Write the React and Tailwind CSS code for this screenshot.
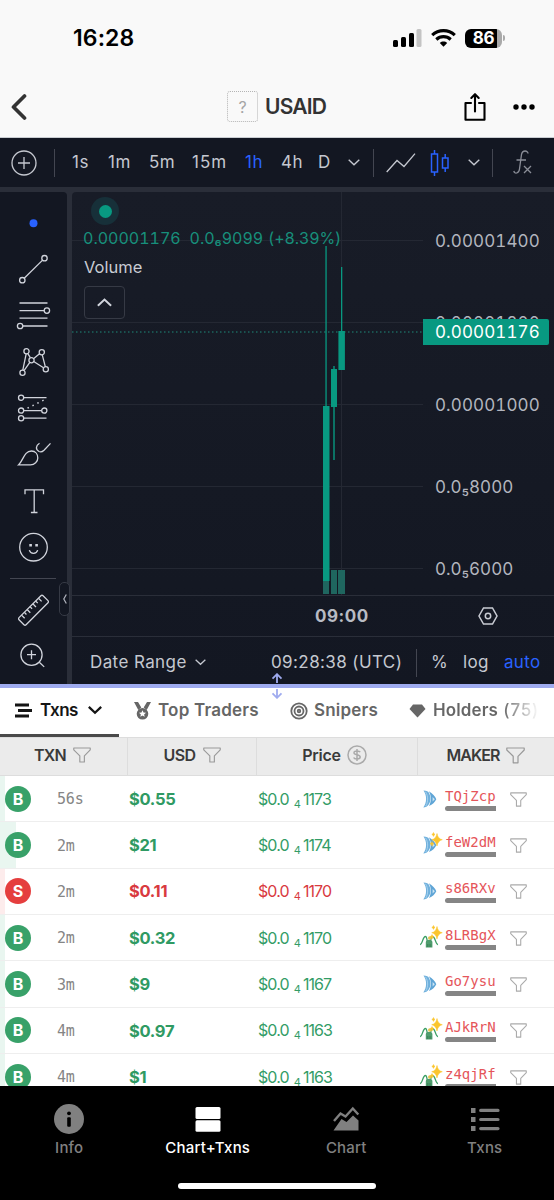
import React from "react";

const trades = [
  { side: "B", age: "56s", usd: "$0.55", price: "1173", maker: "TQjZcp", fish: true, isNew: false },
  { side: "B", age: "2m", usd: "$21", price: "1174", maker: "feW2dM", fish: true, isNew: true, big: true },
  { side: "S", age: "2m", usd: "$0.11", price: "1170", maker: "s86RXv", fish: true, isNew: false },
  { side: "B", age: "2m", usd: "$0.32", price: "1170", maker: "8LRBgX", fish: false, isNew: true },
  { side: "B", age: "3m", usd: "$9", price: "1167", maker: "Go7ysu", fish: true, isNew: false },
  { side: "B", age: "4m", usd: "$0.97", price: "1163", maker: "AJkRrN", fish: false, isNew: true },
  { side: "B", age: "4m", usd: "$1", price: "1163", maker: "z4qjRf", fish: false, isNew: true },
];

const Chevron = ({ className = "w-[12px]", width = 1.4 }) => (
  <svg viewBox="0 0 12 7" className={`${className} shrink-0`} fill="none" stroke="currentColor" strokeWidth={width}>
    <path d="M.7 .8 6 5.8 11.3 .8" />
  </svg>
);

const Funnel = ({ className }) => (
  <svg viewBox="0 0 19 17" className={`${className} shrink-0`} fill="none" stroke="currentColor" strokeWidth="1.2" strokeLinejoin="round">
    <path d="M.8 1H18.2V3L12 9.3V15.8H7.2V9.3L.8 3Z" />
  </svg>
);

const Tool = ({ children }) => (
  <svg
    viewBox="-23.5 -23.2 47 46.4"
    className="h-[46.4px] w-[47px] shrink-0"
    fill="none"
    stroke="#d1d4dc"
    strokeWidth="1.3"
  >
    {children}
  </svg>
);

const StatusBar = () => (
  <div className="flex h-[76px] items-center pl-[73px] text-black">
    <span className="w-[320px] text-[23px] font-semibold leading-none tracking-[0.1px]">16:28</span>
    <svg viewBox="0 0 29 18" className="h-[18px] w-[29px]">
      <rect x="0" y="11" width="5" height="7" rx="1.5" />
      <rect x="8" y="8" width="5" height="10" rx="1.5" />
      <rect x="16" y="4" width="5" height="14" rx="1.5" />
      <rect x="23.5" y="0" width="5" height="18" rx="1.5" fill="#c4c4c4" />
    </svg>
    <svg viewBox="0 0 25 18" className="ml-[9px] h-[18px] w-[25px]" fill="none" stroke="#000" strokeWidth="3.1">
      <path d="M1.2 6.2C7.5 .1 17.5 .1 23.8 6.2" />
      <path d="M5.3 10.5C9.4 6.7 15.6 6.7 19.7 10.5" />
      <path d="M12.5 17.8 8.8 14C11 12.1 14 12.1 16.2 14Z" fill="#000" stroke="none" />
    </svg>
    <div className="ml-[9px] flex h-[19px] w-[37px] items-center justify-center rounded-[6px] bg-linear-to-r from-black from-86% to-[#a9a9a9] to-86%">
      <span className="text-[17px] font-bold leading-none tracking-[-0.3px] text-white">86</span>
    </div>
    <div className="ml-px h-[6px] w-[2px] rounded-r bg-[#aaa]" />
  </div>
);

const TitleBar = () => (
  <div className="flex h-[62px] items-center border-b border-[#c9cdd2] pl-[11px] text-black">
    <svg viewBox="0 0 16 28" className="h-[28px] w-[16px]" fill="none" stroke="#333" strokeWidth="3.7" strokeLinecap="round" strokeLinejoin="round">
      <path d="M13.5 3 2.5 14 13.5 25" />
    </svg>
    <div className="ml-[200px] flex h-[31px] w-[31px] items-center justify-center rounded-[3px] border-[1.5px] border-dotted border-[#b4b4b4] text-[16px] text-[#a5a5a5]">
      ?
    </div>
    <span className="ml-[7px] w-[199px] text-[21px] font-semibold tracking-[-0.8px] text-[#333]">USAID</span>
    <svg viewBox="0 0 22 30" className="h-[30px] w-[22px]" fill="none" stroke="#000" strokeWidth="2.1" strokeLinejoin="round" strokeLinecap="round">
      <path d="M7 11H1.5V27.8H20.5V11H15M11 19.5V3M7.3 5.9 11 2.2 14.7 5.9" />
    </svg>
    <svg viewBox="0 0 22 6" className="ml-[27px] h-[6px] w-[22px]">
      <circle cx="3" cy="3" r="2.7" />
      <circle cx="11" cy="3" r="2.7" />
      <circle cx="19" cy="3" r="2.7" />
    </svg>
  </div>
);

const ChartToolbar = () => (
  <div className="flex h-[49px] items-center bg-[#131722] pl-[11px] text-[17px] text-[#c5c8d0]">
    <svg viewBox="0 0 26 26" className="h-[26px] w-[26px]" fill="none" stroke="currentColor" strokeWidth="1.3">
      <circle cx="13" cy="13" r="12" />
      <path d="M13 7V19M7 13H19" />
    </svg>
    <div className="ml-[17px] h-[28px] w-px bg-[#434651]" />
    <div className="ml-[17px] flex pt-px tracking-[0.5px]">
      <span className="w-[36px]">1s</span>
      <span className="w-[41px]">1m</span>
      <span className="w-[43px]">5m</span>
      <span className="w-[53px] tracking-[1px]">15m</span>
      <span className="w-[36px] text-[#2962ff]">1h</span>
      <span className="w-[37px]">4h</span>
      <span className="w-[30px]">D</span>
    </div>
    <Chevron />
    <div className="ml-[13px] h-[28px] w-px bg-[#434651]" />
    <svg viewBox="0 0 30 20" className="ml-[12px] h-[20px] w-[30px]" fill="none" stroke="currentColor" strokeWidth="1.3">
      <path d="M.7 19 11 7.5 18 13.5 29 .7" />
    </svg>
    <svg viewBox="0 0 20 28" className="ml-[14px] h-[28px] w-[20px]" fill="none" stroke="#2962ff" strokeWidth="1.5">
      <path d="M1.5 5H7.5V23H1.5ZM4.5 5V1M4.5 23V27M12.5 9H18V19H12.5ZM15.2 9V5M15.2 19V23" />
    </svg>
    <Chevron className="ml-[18px] w-[12px]" />
    <div className="ml-[12px] h-[28px] w-px bg-[#434651]" />
    <svg viewBox="0 0 19 25" className="ml-[20px] h-[25px] w-[19px]" fill="none" stroke="#8b8e98" strokeWidth="1.3">
      <path d="M15 3.5C15 .5 9.5 -.5 8.5 4.5L6.5 19C6 23.5 1.5 24.5 .8 21M3.5 10H13M11 16 18 23M18 16 11 23" />
    </svg>
  </div>
);

const Sidebar = () => (
  <div className="relative w-[67px] rounded-tr-[4px] bg-[#131722] pl-[10px] pt-[7.5px]">
    <div className="flex flex-col">
      <Tool>
        <circle r="4" fill="#2962ff" stroke="none" />
      </Tool>
      <Tool>
        <circle cx="-11.2" cy="11" r="2.7" />
        <circle cx="11" cy="-11" r="2.7" />
        <path d="M-9.3 9.1 9.1-9.1" />
      </Tool>
      <Tool>
        <path d="M-14-12.2H14M-14-4.6H10.7M-14 3H14M-10.7 10.8H14" />
        <circle cx="13.4" cy="-4.6" r="2.7" />
        <circle cx="-13.4" cy="10.8" r="2.7" />
      </Tool>
      <Tool>
        <path d="M-7.3-8.5-10.7 8M-9.5 8.5-3.5 0M0-3.5 6.3-8.6M8.7-7.5 11.8 4.4M.2-.7 10 5.6M-5.8-8.8-3.2-4.5" />
        <circle cx="-7" cy="-11" r="2.6" />
        <circle cx="8.3" cy="-10" r="2.6" />
        <circle cx="-2" cy="-2" r="2.6" />
        <circle cx="-11" cy="10.6" r="2.6" />
        <circle cx="12.3" cy="7" r="2.6" />
      </Tool>
      <Tool>
        <path d="M-9.7-10.5H13M-9.7 2.4H8.2M-9.7 10H13" />
        <path d="M-6 0 12-9" strokeDasharray="1.5 4" strokeWidth="1.5" />
        <circle cx="-12.4" cy="-10.5" r="2.6" />
        <circle cx="-12.4" cy="2.4" r="2.6" />
        <circle cx="10.8" cy="2.4" r="2.6" />
        <circle cx="-12.4" cy="10" r="2.6" />
      </Tool>
      <Tool>
        <path d="M-15 10.7C-10 6-9.5-3.2-2-3.2 2-3.2 4.3 0 4.3 3.7 4.3 7.5 1 10.7-3 10.7Z" />
        <path d="M6-11C2-8.5 2-4.5 5.5-2.7 8-1.5 9.3-2.8 10.5-4L17-10.8" />
      </Tool>
      <Tool>
        <path d="M-8.5-7V-11.3H10V-7M.7-11.3V11.3M-2.6 11.3H4" />
      </Tool>
      <Tool>
        <circle r="13.8" />
        <path d="M-4.2 3C-3 7.2 3 7.2 4.2 3" />
        <path d="M-4.2-2H-1.6M1.8-2H4.4" strokeWidth="2.6" />
      </Tool>
    </div>
    <div className="mt-[7px] h-px w-[46px] bg-[#434651]" />
    <div className="mt-[8px] flex flex-col">
      <Tool>
        <g transform="rotate(-45)">
          <rect x="-17" y="-5" width="34" height="10" rx="1.5" />
          <path d="M-12-5V-.5M-8-5V-2M-4-5V-.5M0-5V-2M4-5V-.5M8-5V-2M12-5V-.5" />
        </g>
      </Tool>
      <Tool>
        <circle cx="-2" cy="-1.5" r="10.6" />
        <path d="M5.8 6 10.7 10.7M-6.5-1.5H2.5M-2-6V3" />
      </Tool>
    </div>
    <div className="absolute left-[59px] top-[390px] z-10 flex h-[34px] w-[11px] items-center justify-center rounded-[5px] border border-[#363a45] bg-[#131722]">
      <svg viewBox="0 0 4 10" className="h-[10px] w-[4px]" fill="none" stroke="#b2b5be" strokeWidth="1.2">
        <path d="M3.3 .5 .8 5 3.3 9.5" />
      </svg>
    </div>
  </div>
);

const PriceChart = () => (
  <div className="relative h-[403px] tabular-nums">
    <svg viewBox="72 192 482 403" className="block h-[403px] w-[482px]" shapeRendering="crispEdges">
      <g stroke="#242833" strokeWidth="1">
        <path d="M72 240.5H423M72 322.5H423M72 404.5H423M72 486.5H423M72 568.5H423M341.5 192V595" />
      </g>
      <path d="M72 332H423" stroke="#1f8a7a" strokeWidth="1" strokeDasharray="1.5 2.5" shapeRendering="auto" />
      <g fill="#1f665f">
        <rect x="323" y="570" width="6" height="24" />
        <rect x="331" y="570" width="6" height="24" />
        <rect x="338" y="570" width="7" height="24" />
      </g>
      <g fill="#089981" shapeRendering="auto">
        <rect x="325.4" y="246" width="1.3" height="160" />
        <rect x="323" y="406" width="6.5" height="175" />
        <rect x="333.3" y="366" width="1.4" height="94" />
        <rect x="331" y="369" width="6" height="38" />
        <rect x="341" y="267" width="1.3" height="65" />
        <rect x="338.4" y="331" width="6.5" height="39" />
      </g>
    </svg>
    <div className="absolute left-[19px] top-[5px] flex h-[28px] w-[28px] items-center justify-center rounded-full bg-[#173039]">
      <div className="h-[13px] w-[13px] rounded-full bg-[#089981]" />
    </div>
    <div className="absolute left-[11px] top-[36px] flex h-[20px] items-center whitespace-nowrap text-[16px] text-[#178f7b]">
      <span className="w-[106.5px]">0.00001176</span>
      <span className="w-[78.5px]">0.0₆9099</span>
      <span className="tracking-[-0.1px]">(+8.39%)</span>
    </div>
    <div className="absolute left-[12px] top-[65px] text-[16.5px] leading-[20px] text-[#c9ccd4]">Volume</div>
    <div className="absolute left-[12px] top-[94px] flex h-[33px] w-[41px] items-center justify-center rounded-[4px] border border-[#363a45] text-[#d1d4dc]">
      <Chevron className="w-[15px] rotate-180" width={1.6} />
    </div>
    <div className="absolute left-[363px] top-[39px] flex flex-col gap-[62px] text-[17px] leading-[20px] tracking-[0.1px] text-[#b2b5be]">
      <span>0.00001400</span>
      <span>0.00001200</span>
      <span>0.00001000</span>
      <span className="tracking-[0]">0.0₅8000</span>
      <span className="tracking-[0]">0.0₅6000</span>
    </div>
    <div className="absolute left-[350.5px] top-[127px] flex h-[26px] w-[126px] items-center rounded-r-[2px] bg-[#089981] pl-[12.5px] pt-[2px] text-[17px] tracking-[0.1px] text-white">
      0.00001176
    </div>
  </div>
);

const ChartPanel = () => (
  <div className="flex h-[492px] gap-[5px] bg-[#2a2e39]">
    <Sidebar />
    <div className="w-[482px] rounded-tl-[4px] bg-linear-to-b from-[#181c27] to-[#131722]">
      <PriceChart />
      <div className="flex h-[42px] items-center border-y border-[#2a2e39] pl-[243px] text-[#b8bbc3]">
        <span className="w-[163px] pt-[2px] text-[17px] font-bold tracking-[0.5px]">09:00</span>
        <svg viewBox="0 0 20 18" className="h-[18px] w-[20px]" fill="none" stroke="#c9ccd4" strokeWidth="1.5">
          <path d="M5.5 1H14.5L19 9 14.5 17H5.5L1 9Z" />
          <circle cx="10" cy="9" r="2.7" />
        </svg>
      </div>
      <div className="flex h-[47px] items-center pl-[18px] pt-[4px] text-[17px] text-[#c5c8d0]">
        <span className="w-[105px] tracking-[0.4px]">Date Range</span>
        <Chevron className="w-[11px]" />
        <span className="ml-[65px] w-[145px] whitespace-nowrap tracking-[0.4px]">09:28:38 (UTC)</span>
        <div className="h-[28px] w-px bg-[#434651]" />
        <span className="ml-[14px] w-[32px]">%</span>
        <span className="w-[41px] tracking-[0.3px]">log</span>
        <span className="tracking-[0.3px] text-[#2962ff]">auto</span>
      </div>
    </div>
  </div>
);

const Splitter = () => (
  <div className="relative h-[4px] bg-[#9fabef]">
    <svg viewBox="0 0 12 26" className="absolute left-[271px] top-[-11px] z-10 h-[26px] w-[12px]" fill="none" stroke="#9fabef" strokeWidth="1.8">
      <path d="M6 10V1.5M1.5 5.7 6 1.2 10.5 5.7M6 16V24.5M1.5 20.3 6 24.8 10.5 20.3" />
    </svg>
  </div>
);

const Tabs = () => (
  <div className="flex h-[49px] items-center bg-white pb-[4px] text-[17px] font-semibold leading-none text-[#666]">
    <div className="relative flex h-full items-center pl-[15px] text-[#151515]">
      <svg viewBox="0 0 17 15" className="h-[15px] w-[17px]" stroke="currentColor" strokeWidth="3">
        <path d="M0 2H14M3 7.5H17M0 13H14" />
      </svg>
      <span className="ml-[8px] w-[48px] tracking-[-0.5px]">Txns</span>
      <Chevron className="w-[14px]" width={2} />
      <div className="absolute -bottom-[4px] left-0 h-[3px] w-[119px] bg-[#4a4a4a]" />
    </div>
    <svg viewBox="0 0 17 18" className="ml-[32px] h-[18px] w-[17px]" fill="currentColor">
      <path d="M0 0H4L7.3 5.5 4.3 8ZM17 0H13L9.7 5.5 12.7 8Z" />
      <path
        fillRule="evenodd"
        d="M8.5 6A5.8 5.8 0 1 1 8.5 17.6 5.8 5.8 0 1 1 8.5 6ZM8.5 8.2 7.5 10.5 5 10.7 6.9 12.4 6.3 14.8 8.5 13.5 10.7 14.8 10.1 12.4 12 10.7 9.5 10.5Z"
      />
    </svg>
    <span className="ml-[7px] w-[132px] tracking-[0.2px]">Top Traders</span>
    <svg viewBox="0 0 18 18" className="h-[18px] w-[18px]" fill="none" stroke="currentColor" strokeWidth="1.8">
      <circle cx="9" cy="9" r="7.7" />
      <circle cx="9" cy="9" r="4.5" />
      <circle cx="9" cy="9" r="1.3" />
    </svg>
    <span className="ml-[6px] w-[95px] tracking-[0.2px]">Snipers</span>
    <svg viewBox="0 0 17 14" className="h-[14px] w-[17px]" fill="currentColor">
      <path d="M4 .5H13L16.5 5 8.5 13.5 .5 5Z" />
    </svg>
    <span className="ml-[7px] whitespace-nowrap bg-linear-to-r from-[#666] from-65% to-white bg-clip-text py-1 tracking-[0.1px] text-transparent">
      Holders <span className="ml-px font-medium tracking-[0.8px]">(75)</span>
    </span>
  </div>
);

const TableHeader = () => (
  <div className="grid h-[39px] grid-cols-[128px_129px_161px_136px] border-b border-t border-[#ddd] bg-[#ebebeb] text-[16px] font-semibold text-[#3a3a3a]">
    <div className="flex items-center justify-center gap-[7px] border-r border-[#ddd] pb-[3px] pr-[2px] tracking-[-0.7px]">
      TXN <Funnel className="w-[18px] text-[#999]" />
    </div>
    <div className="flex items-center justify-center gap-[7px] border-r border-[#ddd] pb-[3px] tracking-[-0.5px]">
      USD <Funnel className="w-[18px] text-[#999]" />
    </div>
    <div className="flex items-center justify-center gap-[6px] border-r border-[#ddd] pb-[3px] pr-[5px] tracking-[-0.3px]">
      Price
      <svg viewBox="0 0 20 20" className="h-[20px] w-[20px]" fill="none" stroke="#aaa" strokeWidth="1.5">
        <circle cx="10" cy="10" r="9" />
        <path d="M13.2 7.2C12.5 5.8 7 5.2 7 7.7 7 10.5 13.2 9 13.2 12 13.2 14.6 7.3 14.4 6.7 12.6M10 4V16" />
      </svg>
    </div>
    <div className="flex items-center justify-center gap-[7px] pb-[3px] tracking-[-1px]">
      MAKER <Funnel className="w-[19px] text-[#999]" />
    </div>
  </div>
);

const MakerIcon = ({ fish, isNew }) => (
  <svg viewBox="0 0 24 26" className="h-[26px] w-[24px] shrink-0">
    {fish ? (
      <>
        <path d="M3.5 4.5C6.5 4.5 8.6 5.5 9 7 11 10.5 11 15.5 8.7 18.5 7.5 20.5 5.5 21.5 3.3 21.5 7 16.5 7 9.5 3.5 4.5Z" fill="#6fb0dc" />
        <path d="M8.8 5.2C12.5 7 15.2 10.5 16.3 13.2 15 16 12.5 18.5 9 20 11.5 15.5 11.5 9.5 8.8 5.2Z" fill="#5fa5d6" />
        <path d="M5.5 5.8C8.3 10 8.3 16 5.7 20.2" fill="none" stroke="#a9d3ef" strokeWidth=".9" />
        <path d="M12.6 11V15.4L14.8 13.2Z" fill="#cfe6f5" />
      </>
    ) : (
      <>
        <path
          d="M0 19.5C2.5 20 2.5 11.5 5.5 11.5 7.5 11.5 6 15.5 8 16.5M18 19.5C15.5 20 15.5 11.5 12.5 11.5 10.5 11.5 12 15.5 9.5 16.5"
          fill="none"
          stroke="#3a9e63"
          strokeWidth="1.3"
        />
        <path d="M5.8 17C6 14 12.2 14 12.4 17V22.5H5.8Z" fill="#4f9c6d" />
        <path d="M7.5 22V19M9.1 22V19M10.7 22V19" stroke="#347a50" strokeWidth=".6" />
        <circle cx="9.8" cy="13" r="1.8" fill="#e5c64b" />
      </>
    )}
    {isNew && (
      <path
        d="M17 1.5Q17.9 6.8 22.3 7.7 17.9 8.7 17 14 16 8.7 11.7 7.7 16 6.8 17 1.5ZM13.5 .5Q13.8 2 15 2.4 13.8 2.8 13.5 4.4 13.1 2.8 11.8 2.4 13.1 2 13.5 .5ZM12 9.5Q12.4 11.2 14 11.7 12.4 12.2 12 14 11.5 12.2 10 11.7 11.5 11.2 12 9.5Z"
        fill="#fbc52d"
        stroke="#fbc52d"
        strokeWidth=".5"
      />
    )}
  </svg>
);

const TradeRow = ({ trade }) => {
  const buy = trade.side === "B";
  return (
    <div className="relative grid h-[46.35px] shrink-0 grid-cols-[57px_72px_129px_162px_1fr] items-center border-b border-[#eee] bg-white">
      <div className={`absolute inset-y-0 left-0 ${trade.big ? "w-[16px]" : "w-[5px]"} ${buy ? "bg-[#e9f6f0]" : "bg-[#fdecec]"}`} />
      <div
        className={`relative ml-[5px] flex h-[26px] w-[26px] items-center justify-center rounded-full text-[16px] font-bold text-white ${
          buy ? "bg-[#38a169]" : "bg-[#e53e3e]"
        }`}
      >
        {trade.side}
      </div>
      <span className="pt-[2px] font-['DejaVu_Sans_Mono'] text-[15px] tracking-[-0.2px] text-[#858585]">{trade.age}</span>
      <span className={`pt-px text-[16.5px] font-bold tracking-[-0.3px] ${buy ? "text-[#2f9a63]" : "text-[#d93a3f]"}`}>{trade.usd}</span>
      <span className={`flex items-baseline text-[16px] leading-[20px] tracking-[-0.9px] ${buy ? "text-[#339c66]" : "text-[#d93a3f]"}`}>
        $0.0
        <span className="relative top-[3px] ml-[5px] mr-[3px] text-[11px] leading-none">4</span>
        {trade.price}
      </span>
      <div className="flex h-full items-center">
        <MakerIcon fish={trade.fish} isNew={trade.isNew} />
        <div className="ml-px flex w-[51px] flex-col">
          <span className="font-['DejaVu_Sans_Mono'] text-[14px] leading-[18px] text-[#e5555a]">{trade.maker}</span>
          <div className="mt-px h-[5px] rounded-l-full bg-[#858585]" />
        </div>
        <Funnel className="ml-[14px] mt-px w-[17px] text-[#aaa]" />
      </div>
    </div>
  );
};

const NavItem = ({ label, active, children }) => (
  <div className={`flex flex-1 flex-col items-center text-[15px] font-medium ${active ? "text-white" : "text-[#808080]"}`}>
    <svg viewBox="0 0 30 30" className="h-[30px] w-[30px]" fill="currentColor">
      {children}
    </svg>
    <span className="mt-[3px] leading-[22px] tracking-[0.2px]">{label}</span>
  </div>
);

const BottomNav = () => (
  <div className="flex h-[114px] flex-col items-center bg-black pt-[18px]">
    <div className="flex w-full">
      <NavItem label="Info">
        <circle cx="15" cy="15" r="15" />
        <circle cx="15" cy="9.3" r="1.9" fill="#000" />
        <rect x="13.2" y="13.2" width="3.6" height="9.5" rx="1" fill="#000" />
      </NavItem>
      <NavItem label="Chart+Txns" active>
        <rect x="2.5" y="3" width="25" height="12" rx="1.5" />
        <rect x="2.5" y="16.2" width="25" height="11.5" rx="1.5" />
      </NavItem>
      <NavItem label="Chart">
        <path d="M2.5 26.5 10.5 15 15.5 18 22 11.5 27.5 16.5V26.5Z" />
        <path d="M3 17 9.5 9.5 14.5 12.5 21.8 4.5 27.3 10.5" fill="none" stroke="currentColor" strokeWidth="2.4" />
      </NavItem>
      <NavItem label="Txns">
        <path d="M1 4h4.5v5H1zM1 13h4.5v5H1zM1 22h4.5v5H1z" />
        <path d="M10.7 6.4H28M10.7 15.5H28M10.7 24.6H28" stroke="currentColor" strokeWidth="3.2" strokeLinecap="round" />
      </NavItem>
    </div>
    <div className="mt-[24px] h-[6px] w-[198px] rounded-full bg-white" />
  </div>
);

export default function App() {
  return (
    <div className="flex h-[1200px] w-[554px] flex-col overflow-hidden bg-[#f9f9f9] font-[Inter,sans-serif]">
      <StatusBar />
      <TitleBar />
      <ChartToolbar />
      <div className="h-[5px] shrink-0 bg-[#2a2e39]" />
      <ChartPanel />
      <Splitter />
      <Tabs />
      <TableHeader />
      <div className="flex h-[310px] flex-col overflow-hidden">
        {trades.map((trade) => (
          <TradeRow key={trade.maker} trade={trade} />
        ))}
      </div>
      <BottomNav />
    </div>
  );
}
